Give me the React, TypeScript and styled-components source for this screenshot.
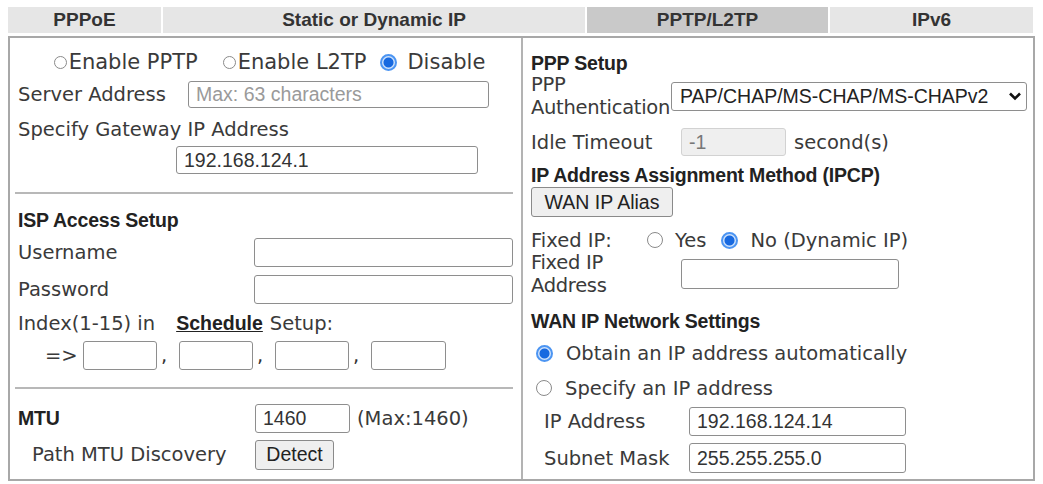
import React, { FC } from 'react';
import styled, { createGlobalStyle } from 'styled-components';

const GlobalStyle = createGlobalStyle`
  body {
    margin: 0;
    background: #fff;
    font-family: "DejaVu Sans", Verdana, sans-serif;
    font-size: 19.5px;
    color: #3a3a3a;
  }
`;

const tabs: { text: string; active?: boolean }[] = [
  { text: 'PPPoE' },
  { text: 'Static or Dynamic IP' },
  { text: 'PPTP/L2TP', active: true },
  { text: 'IPv6' },
];

const Radio: FC<{ checked?: boolean; small?: boolean }> = ({ checked, small }) => (
  <RadioMark $checked={checked} $small={small} />
);

const ChevronDown: FC = () => (
  <svg width="14" height="10" viewBox="0 0 14 10">
    <path d="M2 2.5 L7 7.5 L12 2.5" fill="none" stroke="#111" strokeWidth="2.6" />
  </svg>
);

export default function App() {
  return (
    <>
      <GlobalStyle />
      <Page>
        <TabBar>
          {tabs.map(({ text, active }, index) => (
            <Tab key={index} $active={active}>
              {text}
            </Tab>
          ))}
        </TabBar>
        <Frame>
          <Panel>
            <Row $h={28} $mt={10} $center>
              <RadioOption $gap={2}>
                <Radio small />
                <Big>Enable PPTP</Big>
              </RadioOption>
              <RadioOption $gap={2} $ml={25}>
                <Radio small />
                <Big>Enable L2TP</Big>
              </RadioOption>
              <RadioOption $gap={10} $ml={14}>
                <Radio checked />
                <Big>Disable</Big>
              </RadioOption>
            </Row>
            <Row $h={28} $mt={4}>
              <Label $w={170}>Server Address</Label>
              <TextInput $w={301} $h={27} placeholder="Max: 63 characters" />
            </Row>
            <Row $h={28} $mt={7}>
              <Label>Specify Gateway IP Address</Label>
            </Row>
            <Row $h={28} $mt={3} $pl={158}>
              <TextInput $w={302} $h={28} defaultValue="192.168.124.1" />
            </Row>
            <Rule $mt={18} />
            <Row $h={24} $mt={14}>
              <Heading>ISP Access Setup</Heading>
            </Row>
            <Row $h={30} $mt={5}>
              <Label $w={236}>Username</Label>
              <TextInput $w={259} $h={29} />
            </Row>
            <Row $h={30} $mt={7}>
              <Label $w={236}>Password</Label>
              <TextInput $w={259} $h={29} type="password" />
            </Row>
            <Row $h={28} $mt={5}>
              <Label>Index(1-15) in</Label>
              <ScheduleLink href="#">Schedule</ScheduleLink>
              <Label $ml={7}>Setup:</Label>
            </Row>
            <Row $h={29} $mt={4} $pl={27}>
              <Label $w={38}>=&gt;</Label>
              <TextInput $w={74} $h={29} />
              <Comma>,</Comma>
              <TextInput $w={74} $h={29} />
              <Comma>,</Comma>
              <TextInput $w={74} $h={29} />
              <Comma>,</Comma>
              <TextInput $w={75} $h={29} />
            </Row>
            <Rule $mt={17} />
            <Row $h={29} $mt={15}>
              <Heading $w={237}>MTU</Heading>
              <TextInput $w={95} $h={29} defaultValue="1460" />
              <Label $ml={7}>(Max:1460)</Label>
            </Row>
            <Row $h={29} $mt={7} $pl={14}>
              <Label $w={223}>Path MTU Discovery</Label>
              <Button $w={79}>Detect</Button>
            </Row>
          </Panel>

          <Panel $divider>
            <Row $h={26} $mt={12}>
              <Heading>PPP Setup</Heading>
            </Row>
            <Row $h={36} $mt={2}>
              <TwoLine $w={140}>
                PPP
                <br />
                Authentication
              </TwoLine>
              <Select $w={356}>
                <span>PAP/CHAP/MS-CHAP/MS-CHAPv2</span>
                <ChevronDown />
              </Select>
            </Row>
            <Row $h={28} $mt={14}>
              <Label $w={150}>Idle Timeout</Label>
              <TextInput $w={105} $h={28} defaultValue="-1" disabled />
              <Label $ml={8}>second(s)</Label>
            </Row>
            <Row $h={24} $mt={7}>
              <Heading>IP Address Assignment Method (IPCP)</Heading>
            </Row>
            <Row $h={30} $pl={-2}>
              <Button $w={142}>WAN IP Alias</Button>
            </Row>
            <Row $h={24} $mt={11}>
              <Label $w={116}>Fixed IP:</Label>
              <RadioOption $gap={12}>
                <Radio />
                <span>Yes</span>
              </RadioOption>
              <RadioOption $gap={12} $ml={15}>
                <Radio checked />
                <span>No (Dynamic IP)</span>
              </RadioOption>
            </Row>
            <Row $h={44}>
              <TwoLine $w={150}>
                Fixed IP
                <br />
                Address
              </TwoLine>
              <TextInput $w={218} $h={30} />
            </Row>
            <Row $h={24} $mt={13}>
              <Heading>WAN IP Network Settings</Heading>
            </Row>
            <Row $h={30} $mt={5} $pl={5}>
              <RadioOption $gap={13}>
                <Radio checked />
                <span>Obtain an IP address automatically</span>
              </RadioOption>
            </Row>
            <Row $h={30} $mt={5} $pl={5}>
              <RadioOption $gap={13}>
                <Radio />
                <span>Specify an IP address</span>
              </RadioOption>
            </Row>
            <Row $h={29} $mt={4} $pl={13}>
              <Label $w={145}>IP Address</Label>
              <TextInput $w={217} $h={29} defaultValue="192.168.124.14" />
            </Row>
            <Row $h={30} $mt={7} $pl={13}>
              <Label $w={145}>Subnet Mask</Label>
              <TextInput $w={217} $h={30} defaultValue="255.255.255.0" />
            </Row>
          </Panel>
        </Frame>
      </Page>
    </>
  );
}

const Page = styled.div`
  width: 1027px;
  padding: 7px 0 0 8px;
`;

const TabBar = styled.div`
  display: grid;
  grid-template-columns: 153px 422px 241px 1fr;
  column-gap: 2px;
  height: 26px;
  margin-right: 2px;
`;

const Tab = styled.div<{ $active?: boolean }>`
  display: flex;
  align-items: center;
  justify-content: center;
  background: ${({ $active }) => ($active ? '#c9c9c9' : '#e6e6e6')};
  font-family: "Liberation Sans", Arial, sans-serif;
  font-weight: bold;
  font-size: 19px;
  color: #333;
`;

const Frame = styled.div`
  display: grid;
  grid-template-columns: 511px 1fr;
  height: 445px;
  margin-top: 3px;
  border: 2px solid #a8a8a8;
  box-sizing: border-box;
`;

const Panel = styled.div<{ $divider?: boolean }>`
  display: flex;
  flex-direction: column;
  padding-left: 8px;
  border-left: ${({ $divider }) => ($divider ? '2px solid #b3b3b3' : 'none')};
`;

const Row = styled.div<{ $h: number; $mt?: number; $pl?: number; $center?: boolean }>`
  display: flex;
  align-items: center;
  justify-content: ${({ $center }) => ($center ? 'center' : 'flex-start')};
  height: ${({ $h }) => $h}px;
  margin-top: ${({ $mt = 0 }) => $mt}px;
  padding-left: ${({ $pl = 0 }) => $pl}px;
  white-space: nowrap;
`;

const Label = styled.span<{ $w?: number; $ml?: number }>`
  flex: none;
  width: ${({ $w }) => ($w ? `${$w}px` : 'auto')};
  margin-left: ${({ $ml = 0 }) => $ml}px;
  color: #3a3a3a;
`;

const TwoLine = styled.div<{ $w: number }>`
  flex: none;
  width: ${({ $w }) => $w}px;
  line-height: 23px;
  letter-spacing: -0.3px;
  color: #3a3a3a;
`;

const Heading = styled.span<{ $w?: number }>`
  flex: none;
  width: ${({ $w }) => ($w ? `${$w}px` : 'auto')};
  font-family: "Liberation Sans", Arial, sans-serif;
  font-weight: bold;
  font-size: 19.5px;
  color: #222;
  letter-spacing: -0.2px;
`;

const Big = styled.span`
  font-size: 21px;
`;

const ScheduleLink = styled.a`
  margin-left: 21px;
  font-family: "Liberation Sans", Arial, sans-serif;
  font-weight: bold;
  font-size: 19.5px;
  color: #222;
  text-decoration: underline;
`;

const TextInput = styled.input<{ $w: number; $h: number }>`
  flex: none;
  box-sizing: border-box;
  width: ${({ $w }) => $w}px;
  height: ${({ $h }) => $h}px;
  padding: 0 7px;
  border: 1.5px solid #8e8e8e;
  border-radius: 3px;
  background: #fff;
  font-family: "Liberation Sans", Arial, sans-serif;
  font-size: 19.5px;
  color: #333;
  outline: none;

  &::placeholder {
    color: #9a9a9a;
  }

  &:disabled {
    background: #efefef;
    border-color: #d2d2d2;
    color: #777;
  }
`;

const Select = styled.div<{ $w: number }>`
  flex: none;
  display: flex;
  align-items: center;
  justify-content: space-between;
  box-sizing: border-box;
  width: ${({ $w }) => $w}px;
  height: 29px;
  padding: 0 4px 0 8px;
  border: 1.5px solid #8e8e8e;
  border-radius: 3px;
  font-family: "Liberation Sans", Arial, sans-serif;
  font-size: 19.5px;
  color: #222;
`;

const Button = styled.button<{ $w: number }>`
  flex: none;
  box-sizing: border-box;
  width: ${({ $w }) => $w}px;
  height: 30px;
  padding: 0;
  border: 1.5px solid #8a8a8a;
  border-radius: 3px;
  background: #efefef;
  font-family: "Liberation Sans", Arial, sans-serif;
  font-size: 19.5px;
  color: #222;
`;

const Comma = styled.span`
  flex: none;
  width: 22px;
  padding-left: 4px;
  box-sizing: border-box;
  color: #333;
`;

const Rule = styled.div<{ $mt: number }>`
  height: 0;
  margin: ${({ $mt }) => $mt}px 8px 0 -3px;
  border-top: 2px solid #b8b8b8;
`;

const RadioOption = styled.span<{ $gap: number; $ml?: number }>`
  display: inline-flex;
  align-items: center;
  gap: ${({ $gap }) => $gap}px;
  margin-left: ${({ $ml = 0 }) => $ml}px;
`;

const RadioMark = styled.span<{ $checked?: boolean; $small?: boolean }>`
  flex: none;
  box-sizing: border-box;
  width: ${({ $checked, $small }) => ($checked ? 17 : $small ? 13 : 16)}px;
  height: ${({ $checked, $small }) => ($checked ? 17 : $small ? 13 : 16)}px;
  border-radius: 50%;
  border: ${({ $checked }) => ($checked ? '2px solid #4c95f2' : '1.2px solid #8a8a8a')};
  background: ${({ $checked }) =>
    $checked ? 'radial-gradient(circle, #1769e0 0 4.5px, #cfe2fb 5.5px)' : '#fff'};
`;
